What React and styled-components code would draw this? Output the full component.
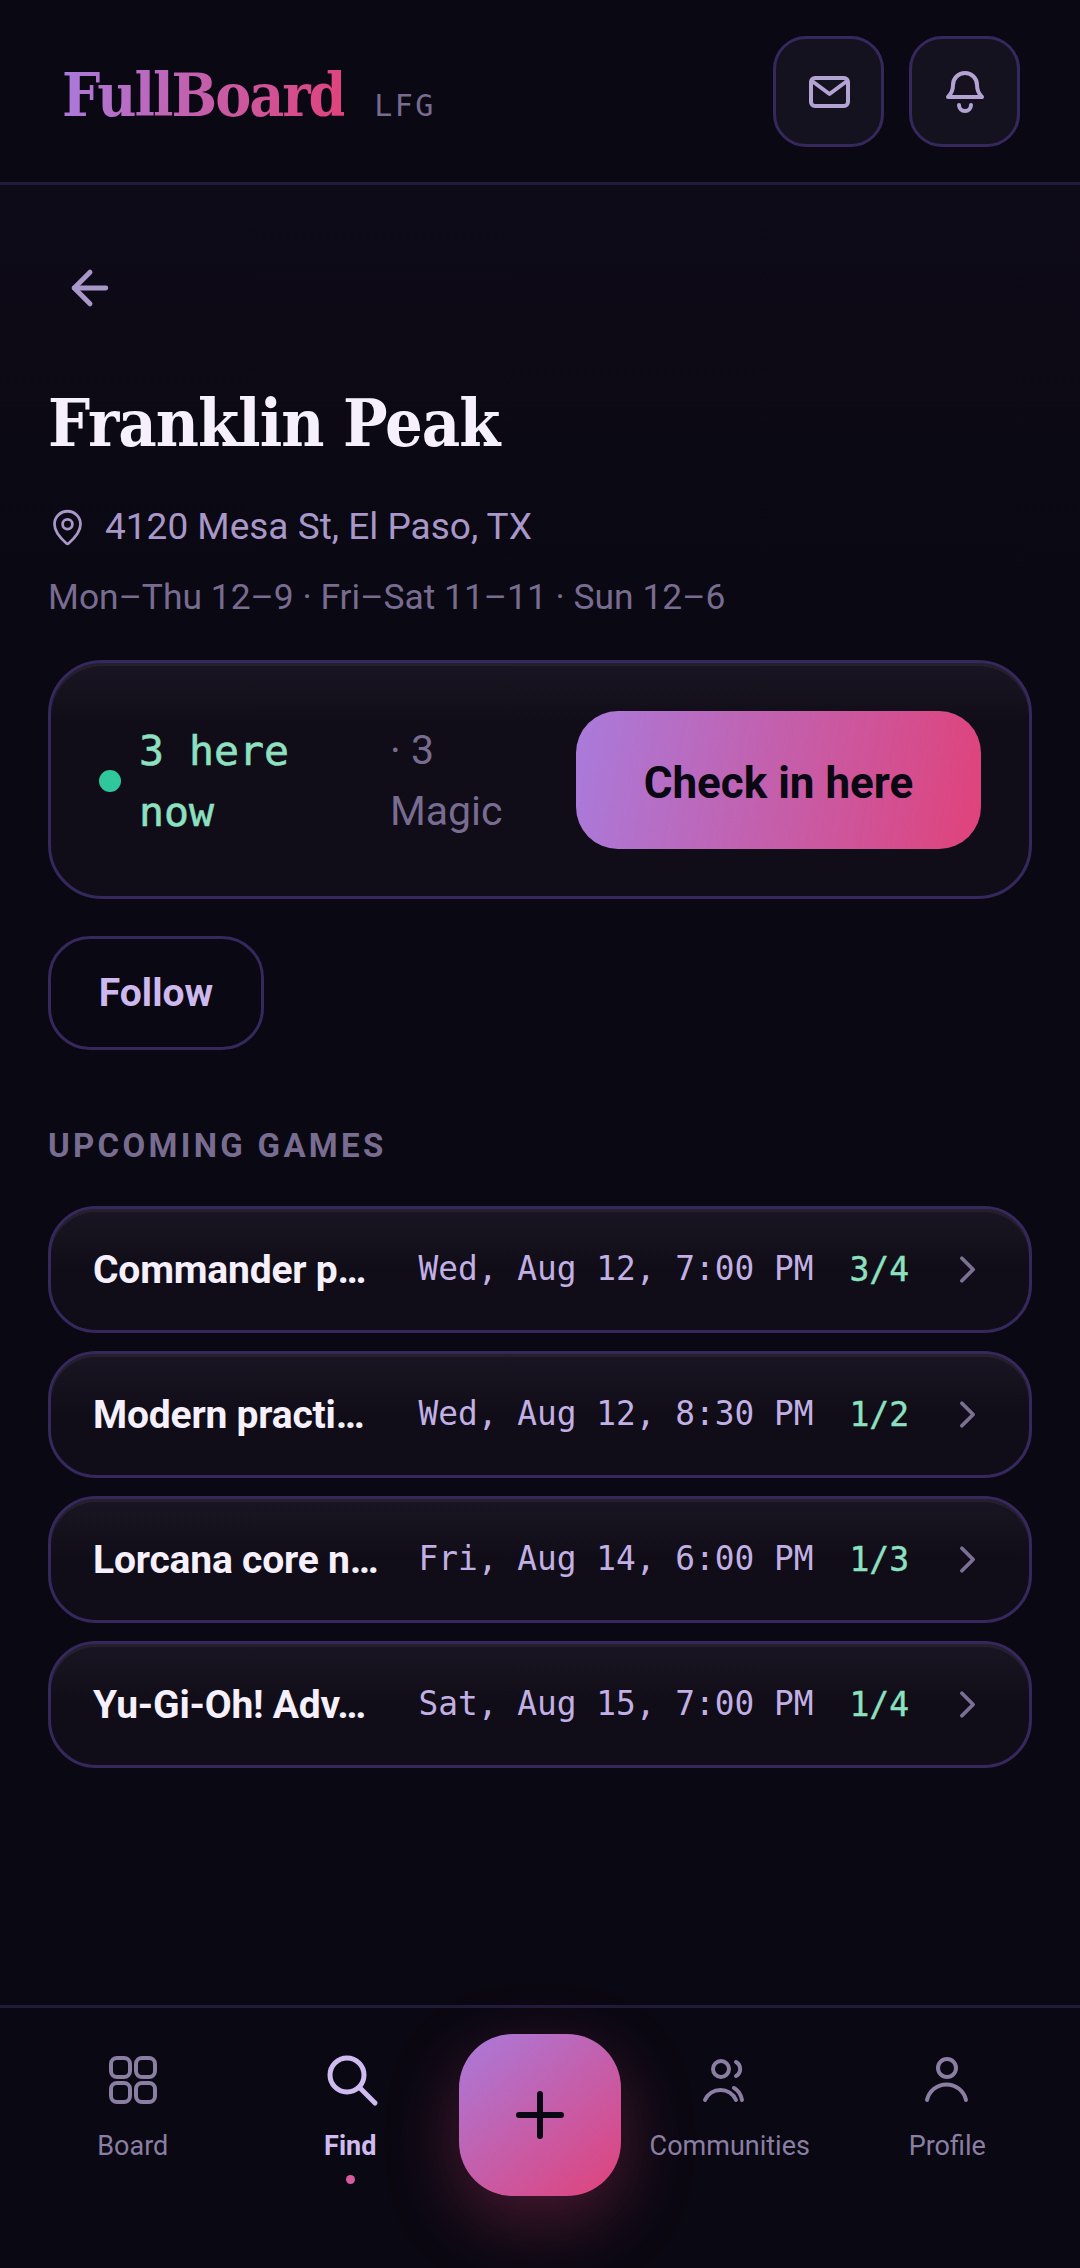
import React from 'react';
import styled, { createGlobalStyle } from 'styled-components';
import { ArrowLeft, ChevronRight, MapPin } from 'lucide-react';

const SANS = '"Roboto", "Liberation Sans", sans-serif';
const SLAB = '"DejaVu Serif Condensed", "DejaVu Serif", serif';
const MONO = '"DejaVu Sans Mono", "Liberation Mono", monospace';
const GRADIENT = 'linear-gradient(100deg, #a97bdc 0%, #e0427a 100%)';
const LINE = '#35285c';
const MUTED = '#786c90';

const GlobalStyle = createGlobalStyle`
  html, body {
    margin: 0;
    padding: 0;
    background: #0a0812;
  }
  * {
    box-sizing: border-box;
  }
`;

const Page = styled.div`
  width: 1080px;
  height: 2268px;
  display: flex;
  flex-direction: column;
  background: #0a0812;
  font-family: ${SANS};
  overflow: hidden;
`;

const Header = styled.header`
  height: 185px;
  flex: none;
  display: flex;
  align-items: flex-start;
  justify-content: space-between;
  padding: 36px 60px 0 62px;
  border-bottom: 3px solid #221a3a;
`;

const Brand = styled.div`
  display: flex;
  align-items: baseline;
  gap: 30px;
  margin-top: 23px;
`;

const Logo = styled.span`
  font-family: ${SLAB};
  font-weight: 700;
  font-size: 60px;
  line-height: 72px;
  letter-spacing: -2px;
  background: ${GRADIENT};
  -webkit-background-clip: text;
  background-clip: text;
  color: transparent;
`;

const Tag = styled.span`
  font-family: ${MONO};
  font-size: 30px;
  letter-spacing: 2.4px;
  color: ${MUTED};
`;

const HeaderActions = styled.div`
  display: flex;
  gap: 25px;
`;

const IconButton = styled.button`
  width: 111px;
  height: 111px;
  padding: 0;
  display: flex;
  align-items: center;
  justify-content: center;
  background: #15121f;
  border: 3px solid ${LINE};
  border-radius: 33px;
  color: #b3a3d2;
`;

const Main = styled.main`
  flex: 1;
  padding: 76px 48px 0;
  background: linear-gradient(#0e0b18 0, #0a0812 420px);
`;

const BackLink = styled.div`
  width: 54px;
  height: 54px;
  margin-left: 15px;
  color: #a897c8;
`;

const Title = styled.h1`
  margin: 68px 0 0;
  font-family: ${SLAB};
  font-weight: 700;
  font-size: 66px;
  line-height: 80px;
  letter-spacing: -1px;
  color: #f5f0fc;
`;

const Address = styled.div`
  display: flex;
  align-items: center;
  gap: 18px;
  margin-top: 40px;
  font-size: 37px;
  line-height: 48px;
  color: #a897c8;
`;

const Hours = styled.div`
  margin-top: 22px;
  font-size: 35.4px;
  line-height: 48px;
  color: ${MUTED};
`;

const Panel = styled.div`
  background: linear-gradient(#1a1522 0, #100d18 60px);
  border: 3px solid ${LINE};
  box-shadow: inset 0 3px 0 rgba(255, 255, 255, 0.05);
`;

const CheckInCard = styled(Panel)`
  height: 239px;
  margin-top: 39px;
  padding: 0 48px;
  border-radius: 54px;
  display: grid;
  grid-template-columns: 22px 233px 1fr 405px;
  column-gap: 18px;
  align-items: center;
`;

const LiveDot = styled.span`
  width: 22px;
  height: 22px;
  margin-top: 2px;
  border-radius: 50%;
  background: #2fc79b;
`;

const LiveText = styled.span`
  padding-top: 2px;
  font-family: ${MONO};
  font-size: 41.5px;
  line-height: 61px;
  -webkit-text-stroke: 0.6px #8de0c0;
  color: #8de0c0;
`;

const GameCount = styled.span`
  max-width: 130px;
  padding-top: 2px;
  font-size: 41px;
  line-height: 61px;
  color: ${MUTED};
`;

const CheckInButton = styled.button`
  height: 138px;
  padding: 6px 0 0;
  border: 0;
  border-radius: 42px;
  background: ${GRADIENT};
  font-family: ${SANS};
  font-size: 44px;
  font-weight: 700;
  color: #0a0812;
`;

const FollowButton = styled.button`
  display: block;
  width: 216px;
  height: 114px;
  margin-top: 37px;
  padding: 0;
  background: transparent;
  border: 3px solid ${LINE};
  border-radius: 42px;
  font-family: ${SANS};
  font-size: 39px;
  font-weight: 700;
  color: #cdb9ee;
`;

const SectionLabel = styled.h2`
  margin: 76px 0 0;
  font-size: 33px;
  font-weight: 700;
  line-height: 40px;
  letter-spacing: 3.3px;
  color: ${MUTED};
`;

const GameList = styled.ul`
  display: flex;
  flex-direction: column;
  gap: 18.4px;
  margin: 40px 0 0;
  padding: 0;
  list-style: none;
`;

const GameRow = styled(Panel).attrs({ as: 'li' })`
  height: 126.6px;
  display: flex;
  align-items: center;
  gap: 36px;
  padding: 0 39px 0 42px;
  border-radius: 48px;
`;

const GameName = styled.span`
  flex: 1;
  min-width: 0;
  padding-top: 2px;
  white-space: nowrap;
  font-size: 39px;
  font-weight: 700;
  letter-spacing: -0.2px;
  color: #f5f0fc;
`;

const GameTime = styled.span`
  font-family: ${MONO};
  font-size: 32.8px;
  white-space: nowrap;
  color: #c2b0e4;
`;

const Seats = styled.span`
  font-family: ${MONO};
  font-size: 33px;
  -webkit-text-stroke: 0.4px #8de0c0;
  color: #8de0c0;
`;

const Chevron = styled(ChevronRight)`
  flex: none;
  color: #7b6f93;
`;

const BottomNav = styled.nav`
  height: 263px;
  flex: none;
  display: grid;
  grid-template-columns: 1fr 1fr 162px 1fr 1fr;
  padding: 0 24px;
  border-top: 3px solid #221a3a;
`;

const NavItem = styled.div`
  position: relative;
  display: flex;
  flex-direction: column;
  align-items: center;
  padding-top: 39px;
  color: ${props => (props.$active ? '#d0bbf0' : '#8a7ea3')};
`;

const NavLabel = styled.span`
  margin-top: 13px;
  font-size: 27px;
  line-height: 40px;
  font-weight: ${props => (props.$active ? 700 : 400)};
`;

const ActiveDot = styled.span`
  width: 9px;
  height: 9px;
  margin-top: 9px;
  border-radius: 50%;
  background: #d55aa0;
`;

const Fab = styled.button`
  width: 162px;
  height: 162px;
  margin-top: 26px;
  padding: 0;
  display: flex;
  align-items: center;
  justify-content: center;
  border: 0;
  border-radius: 54px;
  background: linear-gradient(140deg, #a97bdc 0%, #e0427a 100%);
  box-shadow: 0 24px 72px rgba(224, 66, 122, 0.3);
  color: #0a0812;
`;

const Glyph = ({ size, stroke = 4, children }) => (
  <svg
    width={size}
    height={size}
    viewBox={`0 0 ${size} ${size}`}
    fill="none"
    stroke="currentColor"
    strokeWidth={stroke}
    strokeLinecap="round"
    strokeLinejoin="round"
  >
    {children}
  </svg>
);

const MailIcon = () => (
  <Glyph size={48}>
    <rect x="6" y="10" width="37" height="28" rx="4" />
    <path d="M7 13l17.5 13L42 13" />
  </Glyph>
);

const BellIcon = () => (
  <Glyph size={48}>
    <path d="M7 29c3-3 5-6 5-12a12 12 0 0 1 24 0c0 6 2 9 5 12z" />
    <path d="M18 37a6 6 0 0 0 12 0" />
  </Glyph>
);

const BoardIcon = () => (
  <Glyph size={66}>
    <rect x="11" y="11" width="19" height="19" rx="6" />
    <rect x="36" y="11" width="19" height="19" rx="6" />
    <rect x="11" y="36" width="19" height="19" rx="6" />
    <rect x="36" y="36" width="19" height="19" rx="6" />
  </Glyph>
);

const SearchIcon = () => (
  <Glyph size={66} stroke={5}>
    <circle cx="30" cy="28" r="17" />
    <path d="M43 41l15 15" />
  </Glyph>
);

const CommunitiesIcon = () => (
  <Glyph size={66}>
    <circle cx="24" cy="22" r="8" />
    <path d="M8 53a17 17 0 0 1 31 0" />
    <path d="M39 15a8 8 0 0 1 0 14" />
    <path d="M37 41c4 2 7 7 8 12" />
  </Glyph>
);

const ProfileIcon = () => (
  <Glyph size={66}>
    <circle cx="33" cy="21" r="9" />
    <path d="M13 53a20 20 0 0 1 39 0" />
  </Glyph>
);

const PlusIcon = () => (
  <Glyph size={66} stroke={6}>
    <path d="M33 12v42M12 33h42" />
  </Glyph>
);

const games = [
  { name: 'Commander p…', time: 'Wed, Aug 12, 7:00 PM', seats: '3/4' },
  { name: 'Modern practi…', time: 'Wed, Aug 12, 8:30 PM', seats: '1/2' },
  { name: 'Lorcana core n…', time: 'Fri, Aug 14, 6:00 PM', seats: '1/3' },
  { name: 'Yu-Gi-Oh! Adv…', time: 'Sat, Aug 15, 7:00 PM', seats: '1/4' },
];

const App = () => (
  <Page>
    <GlobalStyle />
    <Header>
      <Brand>
        <Logo>FullBoard</Logo>
        <Tag>LFG</Tag>
      </Brand>
      <HeaderActions>
        <IconButton><MailIcon /></IconButton>
        <IconButton><BellIcon /></IconButton>
      </HeaderActions>
    </Header>

    <Main>
      <BackLink><ArrowLeft size={54} strokeWidth={2.2} /></BackLink>
      <Title>Franklin Peak</Title>
      <Address>
        <MapPin size={39} strokeWidth={1.7} />
        4120 Mesa St, El Paso, TX
      </Address>
      <Hours>Mon–Thu 12–9 · Fri–Sat 11–11 · Sun 12–6</Hours>

      <CheckInCard>
        <LiveDot />
        <LiveText>3 here now</LiveText>
        <GameCount>· 3 Magic</GameCount>
        <CheckInButton>Check in here</CheckInButton>
      </CheckInCard>

      <FollowButton>Follow</FollowButton>

      <SectionLabel>UPCOMING GAMES</SectionLabel>
      <GameList>
        {games.map(game => (
          <GameRow key={game.time}>
            <GameName>{game.name}</GameName>
            <GameTime>{game.time}</GameTime>
            <Seats>{game.seats}</Seats>
            <Chevron size={45} strokeWidth={2} />
          </GameRow>
        ))}
      </GameList>
    </Main>

    <BottomNav>
      <NavItem><BoardIcon /><NavLabel>Board</NavLabel></NavItem>
      <NavItem $active>
        <SearchIcon />
        <NavLabel $active>Find</NavLabel>
        <ActiveDot />
      </NavItem>
      <Fab><PlusIcon /></Fab>
      <NavItem><CommunitiesIcon /><NavLabel>Communities</NavLabel></NavItem>
      <NavItem><ProfileIcon /><NavLabel>Profile</NavLabel></NavItem>
    </BottomNav>
  </Page>
);

export default App;
